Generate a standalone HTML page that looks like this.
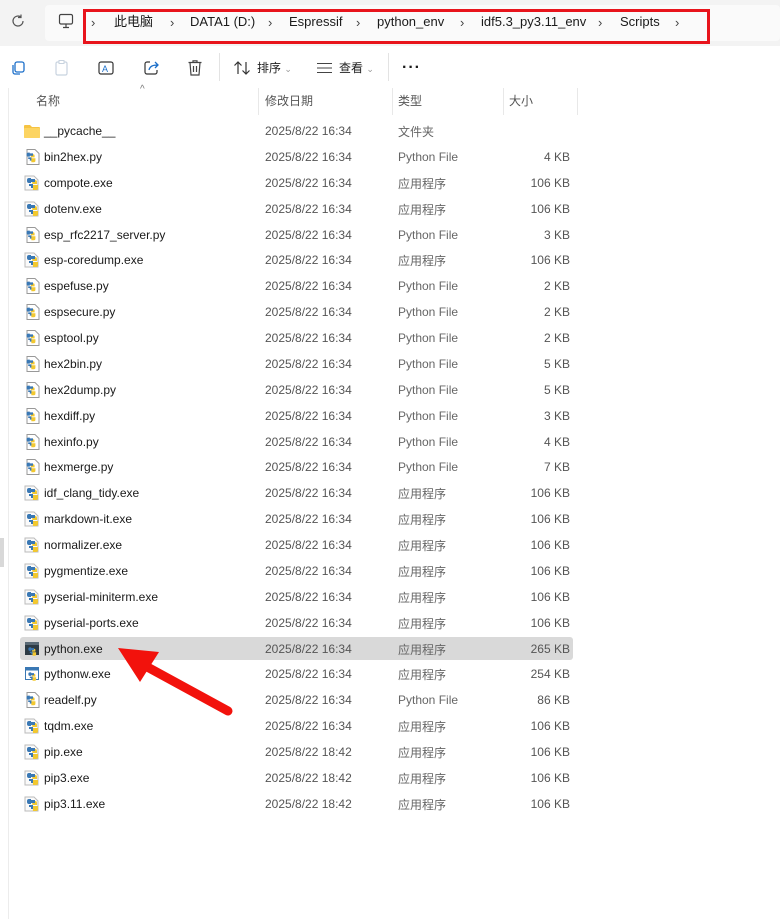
<!DOCTYPE html>
<html><head><meta charset="utf-8"><style>
*{margin:0;padding:0;box-sizing:border-box}
body{width:780px;height:919px;background:#fff;position:relative;overflow:hidden;font-family:"Liberation Sans","Noto Sans CJK SC",sans-serif;font-size:12px;color:#1a1a1a}
.a{position:absolute;white-space:nowrap;line-height:16px}
.top{left:0;top:0;width:780px;height:46px;background:#f3f3f3}
.addr{left:45px;top:5px;width:735px;height:36px;background:#fafafa;border-radius:4px}
.red{left:83px;top:9px;width:627px;height:35px;border:3px solid #e8141c}
.bc{top:14px;font-size:13px;color:#1a1a1a}
.sep{top:15px;font-size:13px;color:#444}
.hd{top:93px;color:#555;font-size:12px}
.vl{top:88px;width:1px;height:27px;background:#e8e8e8}
.n{left:44px;font-size:12px}
.d{left:265px;color:#555}
.t{left:398px;color:#666}
.s{right:210px;color:#555;text-align:right}
.tb{top:60px;font-size:12px;color:#222}
</style></head><body>
<div class="a top"></div>
<div class="a addr"></div>
<svg class="a" style="left:11px;top:14px" width="14" height="14" viewBox="0 0 14 14"><path d="M12 7A5 5 0 1 1 10 3M10 0.5V3.5H7" fill="none" stroke="#555" stroke-width="1.2"/></svg>
<svg class="a" style="left:58px;top:13px" width="16" height="16" viewBox="0 0 16 16"><rect x="1.5" y="1.5" width="13" height="9.5" rx="1.5" fill="none" stroke="#444" stroke-width="1.2"/><path d="M5 14.5H11M8 11V14.5" stroke="#444" stroke-width="1.2"/></svg>
<div class="a red"></div>
<span class="a sep" style="left:91px">›</span>
<span class="a bc" style="left:114px;top:14px">此电脑</span>
<span class="a sep" style="left:170px">›</span>
<span class="a bc" style="left:190px">DATA1 (D:)</span>
<span class="a sep" style="left:268px">›</span>
<span class="a bc" style="left:289px">Espressif</span>
<span class="a sep" style="left:356px">›</span>
<span class="a bc" style="left:377px">python_env</span>
<span class="a sep" style="left:460px">›</span>
<span class="a bc" style="left:481px">idf5.3_py3.11_env</span>
<span class="a sep" style="left:598px">›</span>
<span class="a bc" style="left:620px">Scripts</span>
<span class="a sep" style="left:675px">›</span>

<svg class="a" style="left:10px;top:60px" width="16" height="16" viewBox="0 0 16 16"><rect x="5" y="2" width="9" height="10" rx="2" fill="none" stroke="#1c6fc9" stroke-width="1.3"/><path d="M3 5V12A2 2 0 0 0 5 14H10" fill="none" stroke="#1c6fc9" stroke-width="1.3"/></svg>
<svg class="a" style="left:54px;top:59px" width="16" height="18" viewBox="0 0 16 18"><rect x="2" y="3" width="11" height="13" rx="1.5" fill="none" stroke="#c8d3df" stroke-width="1.2"/><rect x="5" y="1.5" width="5" height="3" fill="#fff" stroke="#c8d3df"/></svg>
<svg class="a" style="left:97px;top:59px" width="18" height="18" viewBox="0 0 18 18"><rect x="2" y="3" width="14" height="12" rx="2" fill="none" stroke="#333" stroke-width="1.2"/><text x="5" y="13" font-size="9" fill="#1c6fc9" font-family="Liberation Sans">A</text></svg>
<svg class="a" style="left:143px;top:59px" width="18" height="18" viewBox="0 0 18 18"><path d="M7 3H4A2 2 0 0 0 2 5V13A2 2 0 0 0 4 15H12A2 2 0 0 0 14 13V11" fill="none" stroke="#333" stroke-width="1.2"/><path d="M6 11C7 7 10 6 15 6M12 3L15 6L12 9" fill="none" stroke="#1c6fc9" stroke-width="1.3"/></svg>
<svg class="a" style="left:187px;top:59px" width="16" height="18" viewBox="0 0 16 18"><path d="M1.5 3.5H14.5M6 3.5V1.8H10V3.5M3 3.5L4 16H12L13 3.5M6.5 7V13M9.5 7V13" fill="none" stroke="#444" stroke-width="1.2"/></svg>
<div class="a" style="left:219px;top:53px;width:1px;height:28px;background:#e3e3e3"></div>
<svg class="a" style="left:233px;top:60px" width="18" height="16" viewBox="0 0 18 16"><path d="M5 14V2M1.5 5.5L5 2L8.5 5.5M13 2V14M9.5 10.5L13 14L16.5 10.5" fill="none" stroke="#333" stroke-width="1.2"/></svg>
<span class="a tb" style="left:257px">排序 <span style="color:#999;font-size:9px">⌄</span></span>
<svg class="a" style="left:317px;top:62px" width="16" height="12" viewBox="0 0 16 12"><path d="M0 1.5H15M0 6H15M0 10.5H15" stroke="#444" stroke-width="1.1"/></svg>
<span class="a tb" style="left:339px">查看 <span style="color:#999;font-size:9px">⌄</span></span>
<div class="a" style="left:388px;top:53px;width:1px;height:28px;background:#e3e3e3"></div>
<span class="a" style="left:402px;top:60px;font-size:16px;font-weight:bold;letter-spacing:1px">···</span>

<div class="a" style="left:8px;top:88px;width:1px;height:831px;background:#ececec"></div>
<div class="a" style="left:0;top:538px;width:4px;height:29px;background:#d8d8d8"></div>
<span class="a" style="left:140px;top:82px;color:#777;font-size:10px">^</span>
<span class="a hd" style="left:36px">名称</span>
<div class="a vl" style="left:258px"></div>
<span class="a hd" style="left:265px">修改日期</span>
<div class="a vl" style="left:392px"></div>
<span class="a hd" style="left:398px">类型</span>
<div class="a vl" style="left:503px"></div>
<span class="a hd" style="left:509px">大小</span>
<div class="a vl" style="left:577px"></div>

<div class="a" style="left:20px;top:637px;width:553px;height:23px;background:#d9d9d9;border-radius:3px"></div>

<div id="rows"></div>
<script>
var R=[["__pycache__","2025/8/22 16:34","文件夹","","f"],
["bin2hex.py","2025/8/22 16:34","Python File","4 KB","p"],
["compote.exe","2025/8/22 16:34","应用程序","106 KB","e"],
["dotenv.exe","2025/8/22 16:34","应用程序","106 KB","e"],
["esp_rfc2217_server.py","2025/8/22 16:34","Python File","3 KB","p"],
["esp-coredump.exe","2025/8/22 16:34","应用程序","106 KB","e"],
["espefuse.py","2025/8/22 16:34","Python File","2 KB","p"],
["espsecure.py","2025/8/22 16:34","Python File","2 KB","p"],
["esptool.py","2025/8/22 16:34","Python File","2 KB","p"],
["hex2bin.py","2025/8/22 16:34","Python File","5 KB","p"],
["hex2dump.py","2025/8/22 16:34","Python File","5 KB","p"],
["hexdiff.py","2025/8/22 16:34","Python File","3 KB","p"],
["hexinfo.py","2025/8/22 16:34","Python File","4 KB","p"],
["hexmerge.py","2025/8/22 16:34","Python File","7 KB","p"],
["idf_clang_tidy.exe","2025/8/22 16:34","应用程序","106 KB","e"],
["markdown-it.exe","2025/8/22 16:34","应用程序","106 KB","e"],
["normalizer.exe","2025/8/22 16:34","应用程序","106 KB","e"],
["pygmentize.exe","2025/8/22 16:34","应用程序","106 KB","e"],
["pyserial-miniterm.exe","2025/8/22 16:34","应用程序","106 KB","e"],
["pyserial-ports.exe","2025/8/22 16:34","应用程序","106 KB","e"],
["python.exe","2025/8/22 16:34","应用程序","265 KB","x"],
["pythonw.exe","2025/8/22 16:34","应用程序","254 KB","w"],
["readelf.py","2025/8/22 16:34","Python File","86 KB","p"],
["tqdm.exe","2025/8/22 16:34","应用程序","106 KB","e"],
["pip.exe","2025/8/22 18:42","应用程序","106 KB","e"],
["pip3.exe","2025/8/22 18:42","应用程序","106 KB","e"],
["pip3.11.exe","2025/8/22 18:42","应用程序","106 KB","e"]];
var snake='<path d="M7 4h3a2 2 0 0 1 2 2v2H8v1h5v3a2 2 0 0 1-2 2H8" fill="#f2c830"/><path d="M6 3h4v3H6v1H4a2 2 0 0 1-2-2V4a2 2 0 0 1 2-2h2z" fill="#3a78b4"/><path d="M4 8h4v4H6v-2H4z" fill="#3a78b4"/>';
var h='';
R.forEach(function(r,i){var y=123+i*25.88;var ic;
if(r[4]=='f')ic='<svg class="a" style="left:24px;top:'+(y+1)+'px" width="16" height="14" viewBox="0 0 16 14"><path d="M0 2a1 1 0 0 1 1-1h5l2 2h7a1 1 0 0 1 1 1v9a1 1 0 0 1-1 1H1a1 1 0 0 1-1-1z" fill="#f6c342"/><rect x="0" y="4" width="16" height="10" rx="1" fill="#fcd462"/></svg>';
else if(r[4]=='p')ic='<svg class="a" style="left:26px;top:'+y+'px" width="14" height="16" viewBox="0 0 14 16"><path d="M1 .5h8l4 4v11H1z" fill="#fff" stroke="#999"/><g transform="translate(-1,2) scale(.8)">'+snake+'</g></svg>';
else if(r[4]=='x')ic='<svg class="a" style="left:24px;top:'+y+'px" width="16" height="16" viewBox="0 0 16 16"><rect x="1" y="1" width="14" height="13" fill="#2d3b45"/><rect x="1" y="1" width="14" height="3" fill="#5a6a76"/><g transform="translate(3,5) scale(.7)">'+snake+'</g></svg>';
else if(r[4]=='w')ic='<svg class="a" style="left:24px;top:'+y+'px" width="16" height="16" viewBox="0 0 16 16"><rect x="1.5" y="1.5" width="13" height="12" fill="#fff" stroke="#3a78b4"/><rect x="1.5" y="1.5" width="13" height="3" fill="#3a78b4"/><g transform="translate(3,5) scale(.7)">'+snake+'</g></svg>';
else ic='<svg class="a" style="left:24px;top:'+y+'px" width="16" height="16" viewBox="0 0 16 16"><path d="M1 1h9l4 4v10H1z" fill="#fafafa" stroke="#bbb"/><g transform="translate(1,1)">'+snake+'</g></svg>';
var ty=(r[2]=='Python File')?y:y+1;
h+=ic+'<span class="a n" style="top:'+y+'px">'+r[0]+'</span><span class="a d" style="top:'+y+'px">'+r[1]+'</span><span class="a t" style="top:'+ty+'px">'+r[2]+'</span><span class="a s" style="top:'+y+'px">'+r[3]+'</span>';});
document.getElementById('rows').innerHTML=h;
</script>
<svg class="a" style="left:0;top:0" width="780" height="919"><line x1="228" y1="711" x2="140" y2="663" stroke="#f2120c" stroke-width="9" stroke-linecap="round"/><path d="M118 648L159 652L140 682Z" fill="#f2120c"/></svg>
</body></html>
